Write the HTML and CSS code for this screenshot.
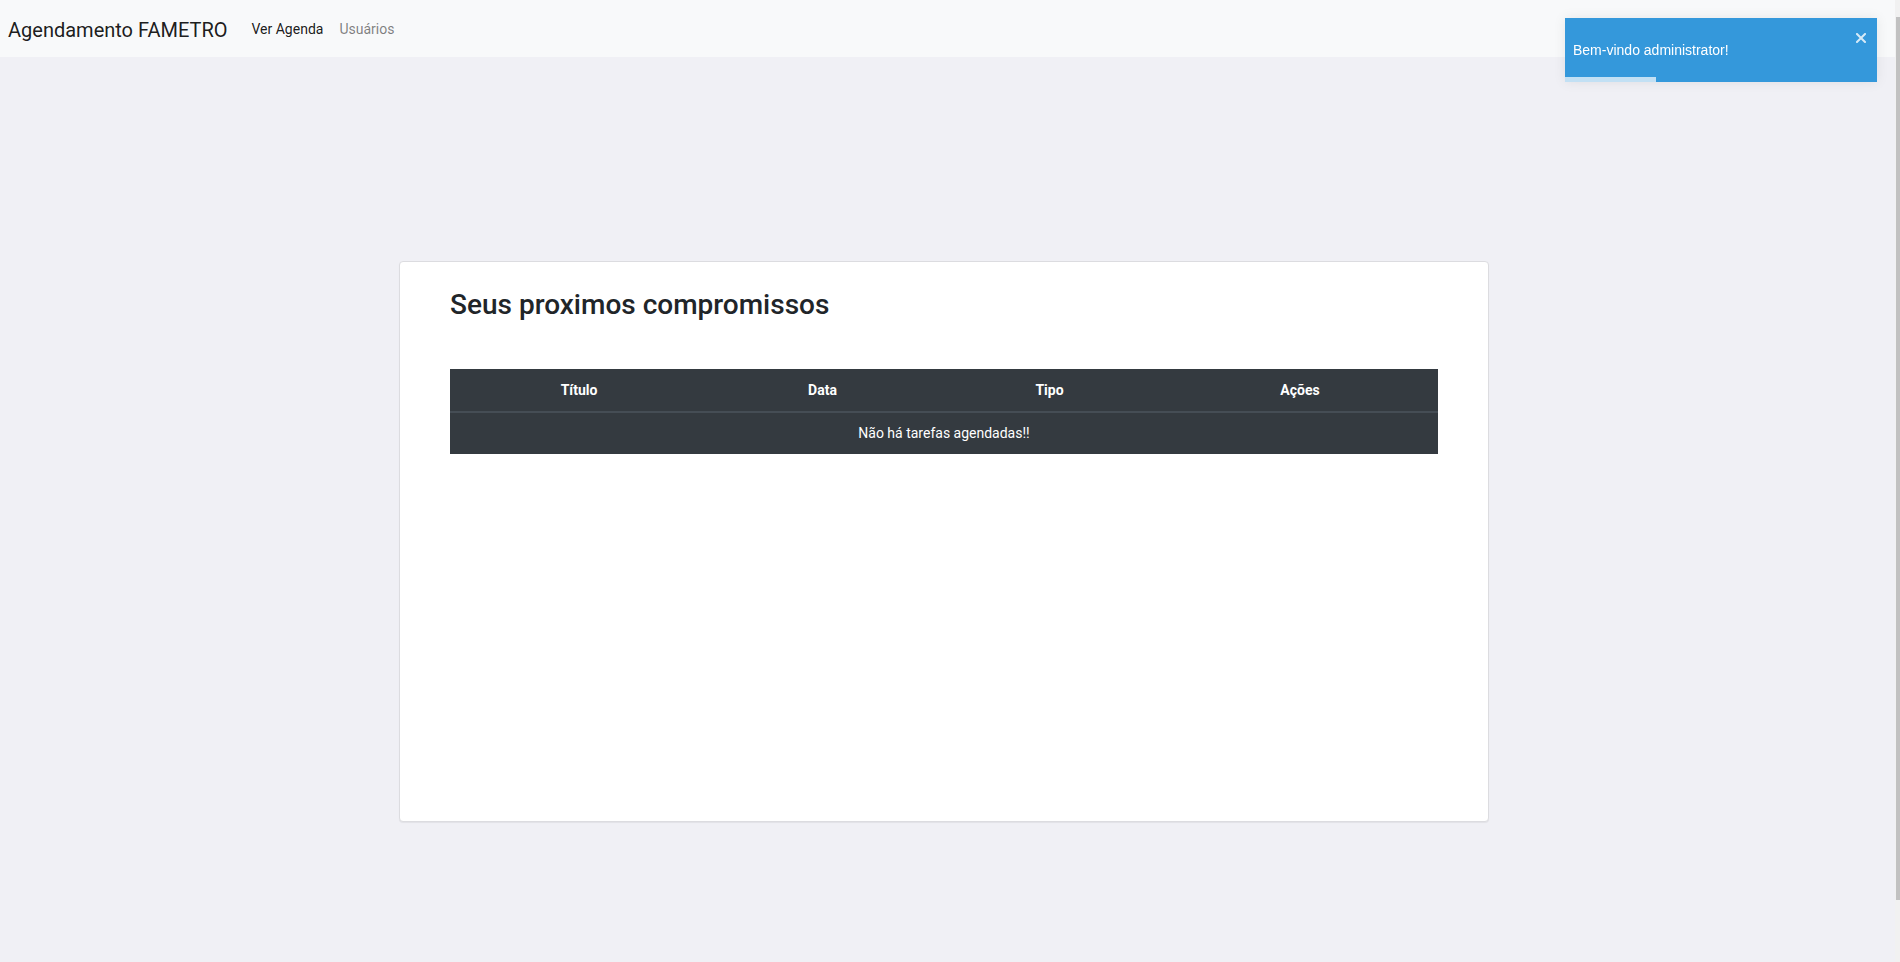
FILE: index.html
```html
<!DOCTYPE html>
<html lang="pt-BR">
<head>
<meta charset="utf-8">
<title>Agendamento FAMETRO</title>
<link rel="stylesheet" href="styles.css">
</head>
<body>
<div class="page">
  <nav class="navbar">
    <a class="brand" href="#">Agendamento FAMETRO</a>
    <a class="nav-link active" href="#">Ver Agenda</a>
    <a class="nav-link" href="#">Usuários</a>
  </nav>
  <main class="card">
    <h3 class="title">Seus proximos compromissos</h3>
    <table class="table">
      <thead>
        <tr>
          <th class="c1">Título</th>
          <th class="c2">Data</th>
          <th class="c3">Tipo</th>
          <th class="c4">Ações</th>
        </tr>
      </thead>
      <tbody>
        <tr><td colspan="4">Não há tarefas agendadas!!</td></tr>
      </tbody>
    </table>
  </main>
</div>
<div class="toast">
  <div class="toast-msg">Bem-vindo administrator!</div>
  <svg class="toast-close" width="10" height="10" viewBox="0 0 10 10"><path d="M1 1L9 9M9 1L1 9" stroke="#fff" stroke-width="2" stroke-linecap="square"/></svg>
  <div class="toast-progress"></div>
</div>
<div class="scrollbar"><div class="thumb"></div></div>
</body>
</html>
```
FILE: styles.css
```css
html, body {
  margin: 0;
  padding: 0;
  height: 100%;
}
body {
  background: #f0f0f5;
  font-family: Roboto, "Liberation Sans", Arial, sans-serif;
  color: #212529;
  overflow: hidden;
}
.page {
  margin-right: 5px;
}
.navbar {
  box-sizing: border-box;
  height: 57px;
  padding: 2px 8px 0 8px;
  background: #f8f9fa;
  display: flex;
  align-items: center;
}
.brand {
  font-size: 20px;
  line-height: 30px;
  color: rgba(0,0,0,.9);
  text-decoration: none;
  margin-right: 16px;
}
.nav-link {
  font-size: 14px;
  line-height: 21px;
  padding: 0 8px;
  color: rgba(0,0,0,.5);
  text-decoration: none;
}
.nav-link.active {
  color: rgba(0,0,0,.9);
}
.card {
  box-sizing: border-box;
  width: 1090px;
  height: 561px;
  margin: 204px 0 0 399px;
  padding: 26px 50px 0 50px;
  background: #fff;
  border: 1px solid #dcdce0;
  border-radius: 4px;
  box-shadow: 0 1px 1px rgba(0,0,0,.06);
}
.title {
  margin: 0 0 47px 0;
  font-size: 28px;
  font-weight: 500;
  line-height: 1.2;
  color: #212529;
}
.table {
  width: 988px;
  border-collapse: collapse;
  background: #343a40;
  color: #fff;
  font-size: 14px;
}
.table th {
  font-weight: 700;
  text-align: center;
  padding: 10px 12px;
  line-height: 22px;
  border-bottom: 2px solid #454d55;
}
.table td {
  text-align: center;
  padding: 10px 12px;
  line-height: 21px;
}
.c1 { width: 258px; box-sizing: border-box; }
.c2 { width: 229px; box-sizing: border-box; }
.c3 { width: 225px; box-sizing: border-box; }
.c4 { width: 276px; box-sizing: border-box; }
.toast {
  position: fixed;
  top: 18px;
  right: 23px;
  width: 312px;
  box-sizing: border-box;
  padding: 22px 8px;
  background: #3498db;
  color: #fff;
  font-family: "Liberation Sans", Arial, sans-serif;
  font-size: 14px;
  line-height: 20px;
  box-shadow: 0 0 12px rgba(0,0,0,.08);
}
.toast-close {
  position: absolute;
  top: 15px;
  left: 291px;
  opacity: .8;
}
.toast-progress {
  position: absolute;
  left: 0;
  bottom: 0;
  height: 5px;
  width: 91px;
  background: rgba(255,255,255,.7);
}
.scrollbar {
  position: fixed;
  top: 0;
  right: 0;
  width: 5px;
  height: 962px;
  background: #f1f1f1;
}
.thumb {
  margin-top: 17px;
  margin-left: 1px;
  width: 4px;
  height: 883px;
  background: #c1c1c1;
}
```
